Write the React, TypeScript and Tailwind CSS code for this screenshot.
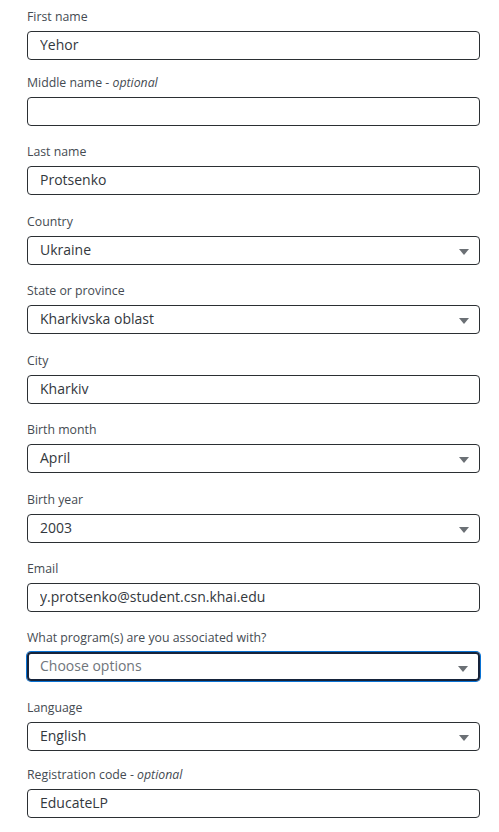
import { useState } from "react";

type Field = {
  label: string;
  optional?: boolean;
  value?: string;
  placeholder?: string;
  select?: boolean;
  focused?: boolean;
  gap: string;
};

const fields: Field[] = [
  { label: "First name", value: "Yehor", gap: "mt-0" },
  { label: "Middle name", optional: true, value: "", gap: "mt-[16px]" },
  { label: "Last name", value: "Protsenko", gap: "mt-[19px]" },
  { label: "Country", value: "Ukraine", select: true, gap: "mt-[20px]" },
  { label: "State or province", value: "Kharkivska oblast", select: true, gap: "mt-[19px]" },
  { label: "City", value: "Kharkiv", gap: "mt-[20px]" },
  { label: "Birth month", value: "April", select: true, gap: "mt-[19px]" },
  { label: "Birth year", value: "2003", select: true, gap: "mt-[20px]" },
  { label: "Email", value: "y.protsenko@student.csn.khai.edu", gap: "mt-[19px]" },
  {
    label: "What program(s) are you associated with?",
    placeholder: "Choose options",
    select: true,
    focused: true,
    gap: "mt-[19px]",
  },
  { label: "Language", value: "English", select: true, gap: "mt-[20px]" },
  { label: "Registration code", optional: true, value: "EducateLP", gap: "mt-[17px]" },
];

const Caret = () => (
  <svg width="10" height="6" viewBox="0 0 10 6" className="absolute right-[10px] top-[12px]">
    <path d="M0 0 L10 0 L5 6 Z" fill="#6b7075" />
  </svg>
);

const FormField = ({ field }: { field: Field }) => {
  const [val, setVal] = useState(field.value ?? "");

  return (
    <div className={`flex flex-col ${field.gap}`}>
      {/* label row */}
      <label className="h-[16px] leading-[13px] text-[12.3px] text-[#454b52] mb-[5px]">
        {field.label}
        {field.optional && (
          <>
            {" - "}
            <i>optional</i>
          </>
        )}
      </label>

      {field.select ? (
        <div
          className={
            field.focused
              ? "relative h-[29px] rounded-[4px] border-2 border-[#16233a] shadow-[0_0_0_1px_#0972d3] flex items-center pl-[11px] pb-[2px]"
              : "relative h-[29px] rounded-[4px] border border-[#2b2f33] flex items-center pl-[12px] pb-[2px]"
          }
        >
          <span className={field.placeholder ? "text-[14px] text-[#6f757b]" : "text-[14px] text-[#33383d]"}>
            {field.placeholder ?? val}
          </span>
          <Caret />
        </div>
      ) : (
        <input
          value={val}
          onChange={(e) => setVal(e.target.value)}
          className="h-[29px] rounded-[4px] border border-[#2b2f33] px-[12px] pb-[2px] text-[14px] text-[#33383d] outline-none"
        />
      )}
    </div>
  );
};

export default function App() {
  return (
    <div
      className="w-[499px] h-[832px] bg-white overflow-hidden pt-[10px] pl-[27px]"
      style={{ fontFamily: '"Open Sans", "Noto Sans", sans-serif' }}
    >
      <div className="w-[453px] flex flex-col">
        {fields.map((f) => (
          <FormField key={f.label} field={f} />
        ))}
      </div>
    </div>
  );
}
